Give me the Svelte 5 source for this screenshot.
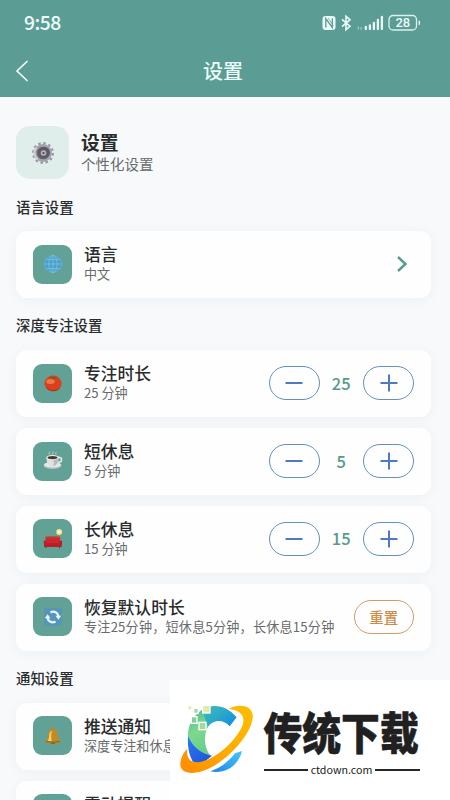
<script>
  const timers = [
    { icon: 'tomato', title: '专注时长', value: 25 },
    { icon: 'coffee', title: '短休息', value: 5 },
    { icon: 'sofa', title: '长休息', value: 15 }
  ];
</script>

{#snippet glyph(name)}
  <svg class="glyph" viewBox="0 0 20 20">
    {#if name === 'globe'}
      <circle cx="10" cy="10" r="9" fill="#4b9fc9" />
      <g fill="none" stroke="#7cc4de" stroke-width=".8">
        <circle cx="10" cy="10" r="8.5" stroke="#63b2d4" />
        <ellipse cx="10" cy="10" rx="4.2" ry="8.6" />
        <path d="M10 1.4v17.2M1.4 10h17.2M3 5.3h14M3 14.7h14" />
      </g>
    {:else if name === 'tomato'}
      <ellipse cx="10" cy="10.4" rx="8.6" ry="7.8" fill="#d8401f" />
      <ellipse cx="7.5" cy="8.4" rx="4.2" ry="2.5" fill="#f1784b" />
      <path d="M2.5 13c3 5 11 6 14.7 1-1.5 5-11.7 6.5-14.7-1z" fill="#a92a18" />
      <path d="M6.500 3.800l3 .4.500-1.400.800 1.300 3.400-.2-2.600 1.300.6 1.200-2.200-1-2 1.200.5-1.600z" fill="#5e6a2d" />
    {:else if name === 'coffee'}
      <ellipse cx="9.5" cy="14.500" rx="9" ry="3.5" fill="#b7bebd" />
      <ellipse cx="9.5" cy="13.800" rx="8.5" ry="2.8" fill="#e5e8e7" />
      <ellipse cx="15.600" cy="8.700" rx="3" ry="2.5" fill="none" stroke="#e8ebea" stroke-width="1.4" />
      <path d="M3.400 6.500h12.200c0 5-2.200 8.800-6.100 8.800S3.400 11.500 3.400 6.500z" fill="#dfe2e2" />
      <path d="M10 8h5.400c-.3 4-2 7-5.900 7 2-1 1.500-4 .5-7z" fill="#b6bdbd" />
      <ellipse cx="9.500" cy="6.500" rx="6.100" ry="2.400" fill="#f4f3f0" />
      <ellipse cx="9.500" cy="6.600" rx="5" ry="1.700" fill="#493831" />
      <path d="M6.500 3.500c-1.500-1.500 1-1.700 0-3M10 3.500c-1.500-1.500 1-1.700 0-3M13 3.500c-1-1 .5-1.500 0-2.500" fill="none" stroke="#ddebea" stroke-width=".7" />
    {:else if name === 'sofa'}
      <path d="M16.500 4v12.500" stroke="#a7975f" stroke-width=".8" />
      <circle cx="16.200" cy="3" r="3" fill="#f1df8d" />
      <circle cx="16.200" cy="3" r="1.700" fill="#fff6c5" />
      <path d="M3 17.500v1.500M16.500 17.500v1.500" stroke="#58342e" />
      <path d="M2.500 8.800q0-1.300 1.300-1.300h12q1.400 0 1.400 1.400V15H2.500z" fill="#c72b2c" />
      <path d="M2.500 8.500q7-1 14.500 0" stroke="#d9403a" stroke-width=".7" fill="none" />
      <path d="M.7 12q1.900-1.300 2.600.8h13.300q.7-2.200 2.500-.8l-.4 6H1.200z" fill="#b91e28" />
      <path d="M3.200 13.300h13.400" stroke="#d93a3b" stroke-width=".7" />
    {:else if name === 'repeat'}
      <rect x="1" y="1" width="18" height="18" rx="3" fill="#5595b9" />
      <g fill="none" stroke="#e6f6fa" stroke-width="2.300">
        <path d="M7.500 5.400C11 3.400 15.100 5.700 15.400 9.200M12.500 14.600C9 16.600 4.900 14.300 4.600 10.800" />
      </g>
      <path d="M12.500 8.700h5.800l-2.900 4zM1.700 11.300h5.800l-2.900-4z" fill="#e6f6fa" />
    {:else if name === 'bell'}
      <circle cx="10" cy="3" r="1.800" fill="#b98521" />
      <ellipse cx="10" cy="16.500" rx="2.500" ry="1.800" fill="#7e5718" />
      <path d="M10 3c-4.500 0-5.100 4-5.300 8-.2 2.500-2.700 3-2.700 5.200 0 1.400 16 1.400 16 0 0-2.200-2.500-2.700-2.700-5.200C15.100 7 14.500 3 10 3z" fill="#bd8b2b" />
      <path d="M7 6c-1.500 3 0 6-2.500 9l4 .5C9 12 7 9 9.500 4.500z" fill="#f2cf67" />
      <path d="M3 15.500q7 1.600 14 0" fill="none" stroke="#865f1c" />
    {/if}
  </svg>
{/snippet}

{#snippet info(icon, title, sub)}
  <div class="tile">{@render glyph(icon)}</div>
  <div class="info">
    <div class="title">{title}</div>
    <div class="sub" class:wide={icon === 'repeat'}>{sub}</div>
  </div>
{/snippet}

<div class="screen">
  <header>
    <div class="status">
      <span class="time">9:58</span>
      <svg class="indicators" width="100" height="18" viewBox="0 0 100 18">
        <rect x="1.500" y="2" width="13" height="14" rx="3" fill="#e9fbf7" />
        <path d="M4.800 13.500V4.500l6.500 9V4.500" fill="none" stroke="#5b9c94" stroke-width="1.300" />
        <path d="M7 4l5.500 7.700" stroke="#5b9c94" stroke-width=".7" />
        <path d="M21 5.300l8 7-4 3.400V2.300l4 3.400-8 7" fill="none" stroke="#e9fbf7" stroke-width="1.600" />
        <path d="M37.300 12.500v3.300M40 13v2.800" stroke="#9accc5" stroke-width="1.200" />
        <path d="M44.800 12.800v2.300M48.900 11.300v3.800M52.900 9v6.100M56.900 6v9.100M60.900 3v12.100" stroke="#e9fbf7" stroke-width="2.300" stroke-linecap="round" />
        <rect x="68" y="1.500" width="27.500" height="14.500" rx="4" fill="none" stroke="#d9f2ec" stroke-width="1.300" />
        <path d="M98.300 6.800v4" stroke="#e9fbf7" stroke-width="1.500" />
        <text x="81.800" y="13.400" text-anchor="middle" class="battery">28</text>
      </svg>
    </div>
    <div class="bar">
      <svg class="back" width="14" height="22" viewBox="0 0 14 22"><path d="M12 1.500L2 11l10 9.500" fill="none" stroke="#eefcf9" stroke-width="1.700" stroke-linecap="round" /></svg>
      <span>设置</span>
    </div>
  </header>

  <main>
    <section class="intro">
      <div class="gear-box">
        <svg width="26" height="26" viewBox="0 0 26 26">
          <circle cx="13" cy="13" r="9.800" fill="none" stroke="#9b99a4" stroke-width="2.400" stroke-dasharray="2.500 2.631" />
          <circle cx="13" cy="13" r="7.600" fill="#696774" stroke="#a3a1ab" stroke-width="2.600" />
          <path d="M8 19.500a8 8 0 0 1-1.500-12" fill="none" stroke="#d0ced4" stroke-width="2" />
          <circle cx="14" cy="12.800" r="6" fill="#5d5b68" />
          <circle cx="13.500" cy="13" r="2.800" fill="#b6b3bd" />
          <circle cx="13.500" cy="13" r="1.100" fill="#45434f" />
        </svg>
      </div>
      <div class="heading">
        <h1>设置</h1>
        <p>个性化设置</p>
      </div>
    </section>

    <h2>语言设置</h2>
    <div class="card">
      {@render info('globe', '语言', '中文')}
      <svg class="chevron" width="12" height="18" viewBox="0 0 12 18"><path d="M2 2l7.500 7L2 16" fill="none" stroke="#579b8c" stroke-width="2.400" /></svg>
    </div>

    <h2>深度专注设置</h2>
    <div class="list">
      {#each timers as t}
        <div class="card">
          {@render info(t.icon, t.title, `${t.value} 分钟`)}
          <button aria-label="减少"><svg width="18" height="18" viewBox="0 0 18 18"><path d="M.5 9h17" /></svg></button>
          <span class="value">{t.value}</span>
          <button aria-label="增加"><svg width="18" height="18" viewBox="0 0 18 18"><path d="M.5 9h17M9 .5v17" /></svg></button>
        </div>
      {/each}
      <div class="card">
        {@render info('repeat', '恢复默认时长', '专注25分钟，短休息5分钟，长休息15分钟')}
        <button class="reset">重置</button>
      </div>
    </div>

    <h2>通知设置</h2>
    <div class="list">
      <div class="card">{@render info('bell', '推送通知', '深度专注和休息提醒')}</div>
      <div class="card">{@render info('bell', '震动提醒', '计时结束时震动')}</div>
    </div>
  </main>

  <aside class="brand">
    <svg class="logo" width="84" height="80" viewBox="0 0 252 240">
      <defs>
        <linearGradient id="cyan" x1="0" y1="0" x2="1" y2=".7"><stop stop-color="#46bcae" /><stop offset=".5" stop-color="#2eaec6" /><stop offset="1" stop-color="#168fe0" /></linearGradient>
        <linearGradient id="green" x1="0" y1="0" x2=".3" y2="1"><stop stop-color="#48b99e" /><stop offset=".55" stop-color="#7ed88d" /><stop offset="1" stop-color="#67cf8a" /></linearGradient>
        <linearGradient id="royal" x1="0" y1="0" x2="1" y2="1"><stop stop-color="#2b7af5" /><stop offset="1" stop-color="#1d50d4" /></linearGradient>
        <linearGradient id="gold" x1="1" y1="0" x2="0" y2="1"><stop stop-color="#ffbd00" /><stop offset=".5" stop-color="#ffac00" /><stop offset="1" stop-color="#ff8a00" /></linearGradient>
        <linearGradient id="blue" x1="0" y1="1" x2="1" y2="0"><stop stop-color="#1d83ea" /><stop offset="1" stop-color="#48c8fa" /></linearGradient>
      </defs>
      <path d="M78 30C108 9 151 14 182 52L161 79C145 59 111 55 94 84L60 75z" fill="url(#cyan)" />
      <path d="M80 28C47 50 31 84 37 123C47 147 72 165 102 166C84 140 82 104 96 80L85 50z" fill="url(#green)" />
      <path d="M36 108C34 142 40 170 54 190L80 190L108 167C77 162 51 143 36 108z" fill="url(#royal)" />
      <path d="M158 27C179 15 204 15 218 24C233 34 233 54 225 75C206 123 154 178 100 205C61 225 13 225 13 193C13 176 22 158 34 146C31 174 40 188 67 187C115 182 177 125 197 82C211 51 197 31 158 27z" fill="url(#gold)" />
      <path d="M103 214C132 204 158 185 177 160L198 153C188 197 146 224 103 214z" fill="url(#blue)" />
      <g stroke="#fff" stroke-width="4">
        <rect x="46" y="50" width="17" height="20" fill="#85cf99" />
        <rect x="69" y="67" width="21" height="22" fill="#a2dc95" />
        <rect x="80" y="16" width="22" height="23" fill="#dcedaa" />
        <rect x="53" y="25" width="14" height="15" fill="#a7d99f" />
      </g>
      <rect x="37" y="19" width="9" height="9" fill="#e2edbb" />
    </svg>
    <div class="wordmark">
      <div class="name">传统下载</div>
      <div class="domain"><i></i><span>ctdown.com</span><i></i></div>
    </div>
  </aside>
</div>

<style>
  .screen {
    position: relative;
    width: 450px;
    height: 800px;
    overflow: hidden;
    background: #f7f9fb;
    font-family: "Noto Sans CJK SC", sans-serif;
    color: #292c2d;
  }
  header { height: 97px; background: #5b9c94; color: #eefcf9; }
  .status {
    display: flex;
    justify-content: space-between;
    align-items: center;
    height: 46px;
    padding: 0 29px 0 24px;
  }
  .time { font-size: 19.300px; font-weight: 500; line-height: 24px; letter-spacing: -.5px; padding-bottom: 2px; }
  .battery { font: 500 13px Roboto, sans-serif; fill: #eefcf9; }
  .bar {
    display: grid;
    grid-template-columns: 40px 1fr 40px;
    align-items: center;
    height: 50px;
    padding: 0 19px 0 15px;
    text-align: center;
    font-size: 20px;
    font-weight: 500;
    line-height: 28px;
  }
  .bar span { padding-bottom: 1px; }
  main { padding: 28px 19px 0 16px; }
  .intro { display: flex; align-items: center; gap: 12px; height: 55px; }
  .gear-box {
    display: flex;
    align-items: center;
    justify-content: center;
    width: 53px;
    height: 53px;
    border-radius: 14px;
    background: #e0eeeb;
  }
  .heading { padding-bottom: 3px; }
  h1, h2, p { margin: 0; }
  h1 { font-size: 18.800px; line-height: 25px; font-weight: 700; }
  p { font-size: 14.500px; line-height: 20px; color: #686b6d; }
  h2 { height: 52px; font-size: 14.400px; line-height: 54px; font-weight: 500; }
  .intro + h2 { height: 51px; line-height: 53px; }
  .list { display: flex; flex-direction: column; gap: 10.600px; }
  .card {
    display: flex;
    align-items: center;
    box-sizing: border-box;
    height: 67.200px;
    padding: 0 17px 1px;
    border-radius: 11px;
    background: #fefefe;
    box-shadow: 0 2px 12px #3d655f0d;
  }
  .tile {
    display: flex;
    align-items: center;
    justify-content: center;
    flex: none;
    width: 39px;
    height: 39px;
    border-radius: 9px;
    background: #62a196;
  }
  .glyph { width: 20px; height: 20px; }
  .info { flex: 1; padding: 0 0 1px 12px; white-space: nowrap; }
  .title { font-size: 16.800px; line-height: 21px; font-weight: 500; }
  .sub { font-size: 13.100px; line-height: 18px; color: #686b6d; }
  .wide { letter-spacing: .220px; }
  .chevron { margin-right: 6px; }
  button {
    display: flex;
    align-items: center;
    justify-content: center;
    flex: none;
    box-sizing: border-box;
    width: 51px;
    height: 34px;
    padding: 0;
    border: 1.200px solid #658fbd;
    border-radius: 17px;
    background: none;
    font: inherit;
  }
  button path { stroke: #4e7ac0; stroke-width: 2; }
  .value { width: 43.500px; text-align: center; font-size: 16.500px; line-height: 24px; font-weight: 500; color: #559c86; padding-bottom: 1px; }
  .reset { width: 60.500px; border-color: #d09b67; color: #d38a46; font-size: 14.400px; font-weight: 500; padding-bottom: 1px; }
  .brand {
    position: absolute;
    left: 170px;
    top: 680px;
    width: 280px;
    height: 120px;
    display: flex;
    box-sizing: border-box;
    padding: 20px 0 0 6px;
    background: #fff;
  }
  .wordmark { width: 156px; margin-left: 3.500px; padding-top: 3px; }
  .name {
    height: 57px;
    font-size: 38.800px;
    line-height: 57px;
    font-weight: 900;
    color: #202020;
    white-space: nowrap;
    transform: scaleY(1.150);
    -webkit-text-stroke: .5px #202020;
  }
  .domain { display: flex; align-items: center; gap: 3px; margin-top: 4px; height: 12px; }
  .domain i { flex: 1; height: 2px; background: #262626; }
  .domain span { font-size: 10.700px; line-height: 12px; color: #202020; padding-bottom: 1px; }
</style>
